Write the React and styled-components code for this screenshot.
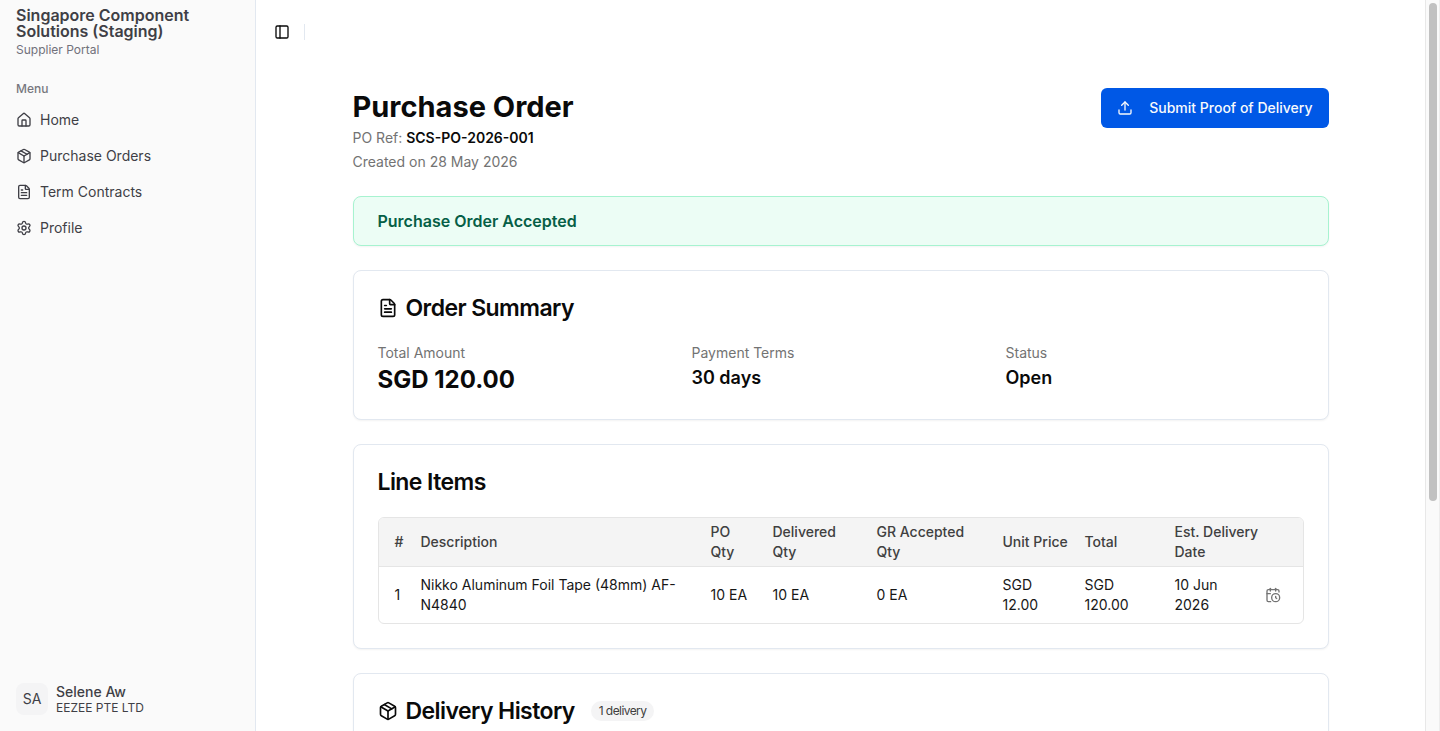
import React from "react";
import styled, { createGlobalStyle } from "styled-components";
import { House, Package, FileText, Settings, PanelLeft, Upload, CalendarClock } from "lucide-react";

const GlobalStyle = createGlobalStyle`
  *, *::before, *::after { box-sizing: border-box; }
  body {
    margin: 0;
    background: #ffffff;
    color: #0a0a0a;
    font-family: Inter, "Liberation Sans", sans-serif;
    font-size: 14px;
    line-height: 20px;
    -webkit-font-smoothing: antialiased;
  }
  h1, h2, p, dl, dt, dd, ul { margin: 0; padding: 0; }
  button { font: inherit; }
`;

const Shell = styled.div`
  display: flex;
  height: 100vh;
  overflow: hidden;
`;

const Sidebar = styled.aside`
  display: flex;
  flex-direction: column;
  flex: 0 0 256px;
  background: #fafafa;
  border-right: 1px solid #e2e8f0;
  color: #3f3f46;
`;

const Brand = styled.div`
  display: flex;
  flex-direction: column;
  gap: 3px;
  height: 64px;
  padding: 7px 16px 0;
`;

const BrandName = styled.span`
  font-size: 16px;
  line-height: 16px;
  font-weight: 600;
`;

const BrandNote = styled.span`
  font-size: 12px;
  line-height: 16px;
  color: #71717a;
`;

const Nav = styled.nav`
  flex: 1;
  padding: 8px;
`;

const NavLabel = styled.div`
  padding: 2px 8px 0;
  font-size: 12px;
  line-height: 30px;
  font-weight: 500;
  color: #77777e;
`;

const NavList = styled.ul`
  display: flex;
  flex-direction: column;
  gap: 4px;
  list-style: none;
`;

const NavLink = styled.a`
  display: flex;
  align-items: center;
  gap: 8px;
  height: 32px;
  padding: 0 8px;
  color: inherit;
  text-decoration: none;
`;

const Account = styled.div`
  display: flex;
  align-items: flex-start;
  gap: 8px;
  padding: 16px 16px 15px;
`;

const Avatar = styled.span`
  display: grid;
  place-items: center;
  width: 32px;
  height: 32px;
  border-radius: 8px;
  background: #f4f4f5;
`;

const AccountText = styled.div`
  display: flex;
  flex-direction: column;
  padding-top: 1px;
  line-height: 16px;
`;

const AccountName = styled.span`
  font-weight: 500;
`;

const AccountCompany = styled.span`
  font-size: 12px;
`;

const Page = styled.div`
  flex: 1;
  min-width: 0;
  overflow: hidden;
`;

const TopBar = styled.header`
  display: flex;
  align-items: center;
  gap: 8px;
  height: 64px;
  padding: 0 12px;
`;

const IconButton = styled.button`
  display: grid;
  place-items: center;
  width: 28px;
  height: 28px;
  padding: 0;
  border: 0;
  border-radius: 6px;
  background: transparent;
  color: ${(p) => (p.$muted ? "#737373" : "#0a0a0a")};
`;

const Divider = styled.span`
  width: 1px;
  height: 16px;
  background: #e2e8f0;
`;

const Content = styled.main`
  display: flex;
  flex-direction: column;
  gap: 24px;
  max-width: 1024px;
  margin: 0 auto;
  padding: 24px;
`;

const Heading = styled.div`
  display: flex;
  justify-content: space-between;
  align-items: flex-start;
`;

const HeadingText = styled.div`
  display: flex;
  flex-direction: column;
  gap: 4px;
`;

const Title = styled.h1`
  && { padding-top: 2px; }
  font-size: 29px;
  line-height: 34px;
  font-weight: 700;
`;

const Meta = styled.p`
  color: #737373;
  strong { color: #0a0a0a; font-weight: 600; }
`;

const PrimaryButton = styled.button`
  display: flex;
  align-items: center;
  gap: 16px;
  height: 40px;
  padding: 0 16px;
  border: 0;
  border-radius: 6px;
  background: #0058e6;
  color: #f8fafc;
  font-weight: 500;
`;

const Card = styled.section`
  padding: 24px;
  border: 1px solid #e2e8f0;
  border-radius: 8px;
  background: #ffffff;
  box-shadow: 0 1px 2px rgba(0, 0, 0, 0.05);
`;

const Notice = styled(Card)`
  padding: 12px 24px;
  border-color: #a7f3d0;
  background: #ecfdf5;
  color: #065f46;
  font-size: 16px;
  line-height: 24px;
  font-weight: 600;
`;

const CardTitle = styled.h2`
  display: flex;
  align-items: center;
  gap: 8px;
  margin-bottom: 22px;
  font-size: 23px;
  line-height: 26px;
  font-weight: 600;
  letter-spacing: -0.025em;
`;

const Badge = styled.span`
  margin-left: 8px;
  padding: 2px 8px;
  border-radius: 10px;
  background: #f4f4f5;
  color: #404040;
  font-size: 12px;
  line-height: 16px;
  font-weight: 400;
`;

const Facts = styled.dl`
  display: grid;
  grid-template-columns: repeat(3, 1fr);
  gap: 16px;
`;

const FactLabel = styled.dt`
  color: #737373;
`;

const FactValue = styled.dd`
  padding-top: 2px;
  font-size: ${(p) => (p.$large ? 24 : 18)}px;
  line-height: ${(p) => (p.$large ? 30 : 26)}px;
  font-weight: ${(p) => (p.$large ? 700 : 600)};
`;

const TableFrame = styled.div`
  border: 1px solid #e5e5e5;
  border-radius: 6px;
  overflow: hidden;
`;

const Table = styled.table`
  width: 100%;
  table-layout: fixed;
  border-collapse: separate;
  border-spacing: 0;
`;

const Th = styled.th`
  width: ${(p) => p.$width || "auto"};
  padding: 4px 0 4px 16px;
  padding-right: ${(p) => (p.$last ? 32 : 0)}px;
  border-bottom: 1px solid #e5e5e5;
  background: #f4f4f4;
  color: #404040;
  font-weight: 500;
  text-align: left;
`;

const Td = styled.td`
  padding: 8px 8px 8px 16px;
  color: #171717;
`;

const DateCell = styled.div`
  display: flex;
  align-items: center;
  justify-content: space-between;
  padding-right: 8px;
`;

const DateText = styled.span`
  width: 64px;
`;

const ScrollTrack = styled.div`
  flex: 0 0 15px;
  padding: 3px 2px 0 3px;
  border-left: 1px solid #e8e8e8;
  border-right: 1px solid #ededed;
  background: #fafafa;
`;

const ScrollThumb = styled.div`
  height: 68.4%;
  width: 8px;
  border-radius: 4px;
  background: #c1c1c1;
`;

const links = [
  ["Home", House],
  ["Purchase Orders", Package],
  ["Term Contracts", FileText],
  ["Profile", Settings],
];

const columns = [
  ["#", "26px"],
  ["Description"],
  ["PO Qty", "62px"],
  ["Delivered Qty", "104px"],
  ["GR Accepted Qty", "126px"],
  ["Unit Price", "82px"],
  ["Total", "90px"],
  ["Est. Delivery Date", "144px"],
];

const items = [
  {
    cells: ["1", "Nikko Aluminum Foil Tape (48mm) AF-N4840", "10 EA", "10 EA", "0 EA", "SGD 12.00", "SGD 120.00"],
    date: "10 Jun 2026",
  },
];

export default function App() {
  return (
    <>
      <GlobalStyle />
      <Shell>
        <Sidebar>
          <Brand>
            <BrandName>Singapore Component Solutions (Staging)</BrandName>
            <BrandNote>Supplier Portal</BrandNote>
          </Brand>
          <Nav>
            <NavLabel>Menu</NavLabel>
            <NavList>
              {links.map(([label, Icon]) => (
                <li key={label}>
                  <NavLink href="#">
                    <Icon size={16} />
                    {label}
                  </NavLink>
                </li>
              ))}
            </NavList>
          </Nav>
          <Account>
            <Avatar>SA</Avatar>
            <AccountText>
              <AccountName>Selene Aw</AccountName>
              <AccountCompany>EEZEE PTE LTD</AccountCompany>
            </AccountText>
          </Account>
        </Sidebar>
        <Page>
          <TopBar>
            <IconButton aria-label="Toggle sidebar">
              <PanelLeft size={16} />
            </IconButton>
            <Divider />
          </TopBar>
          <Content>
            <Heading>
              <HeadingText>
                <Title>Purchase Order</Title>
                <Meta>
                  PO Ref: <strong>SCS-PO-2026-001</strong>
                </Meta>
                <Meta>Created on 28 May 2026</Meta>
              </HeadingText>
              <PrimaryButton>
                <Upload size={16} />
                Submit Proof of Delivery
              </PrimaryButton>
            </Heading>
            <Notice>Purchase Order Accepted</Notice>
            <Card>
              <CardTitle>
                <FileText size={20} />
                Order Summary
              </CardTitle>
              <Facts>
                <div>
                  <FactLabel>Total Amount</FactLabel>
                  <FactValue $large>SGD 120.00</FactValue>
                </div>
                <div>
                  <FactLabel>Payment Terms</FactLabel>
                  <FactValue>30 days</FactValue>
                </div>
                <div>
                  <FactLabel>Status</FactLabel>
                  <FactValue>Open</FactValue>
                </div>
              </Facts>
            </Card>
            <Card>
              <CardTitle>Line Items</CardTitle>
              <TableFrame>
                <Table>
                  <thead>
                    <tr>
                      {columns.map(([label, width], i) => (
                        <Th key={label} $width={width} $last={i === columns.length - 1}>
                          {label}
                        </Th>
                      ))}
                    </tr>
                  </thead>
                  <tbody>
                    {items.map((item) => (
                      <tr key={item.cells[0]}>
                        {item.cells.map((cell, i) => (
                          <Td key={i}>{cell}</Td>
                        ))}
                        <Td>
                          <DateCell>
                            <DateText>{item.date}</DateText>
                            <IconButton $muted aria-label="Change delivery date">
                              <CalendarClock size={16} />
                            </IconButton>
                          </DateCell>
                        </Td>
                      </tr>
                    ))}
                  </tbody>
                </Table>
              </TableFrame>
            </Card>
            <Card>
              <CardTitle>
                <Package size={20} />
                Delivery History
                <Badge>1 delivery</Badge>
              </CardTitle>
            </Card>
          </Content>
        </Page>
        <ScrollTrack>
          <ScrollThumb />
        </ScrollTrack>
      </Shell>
    </>
  );
}
